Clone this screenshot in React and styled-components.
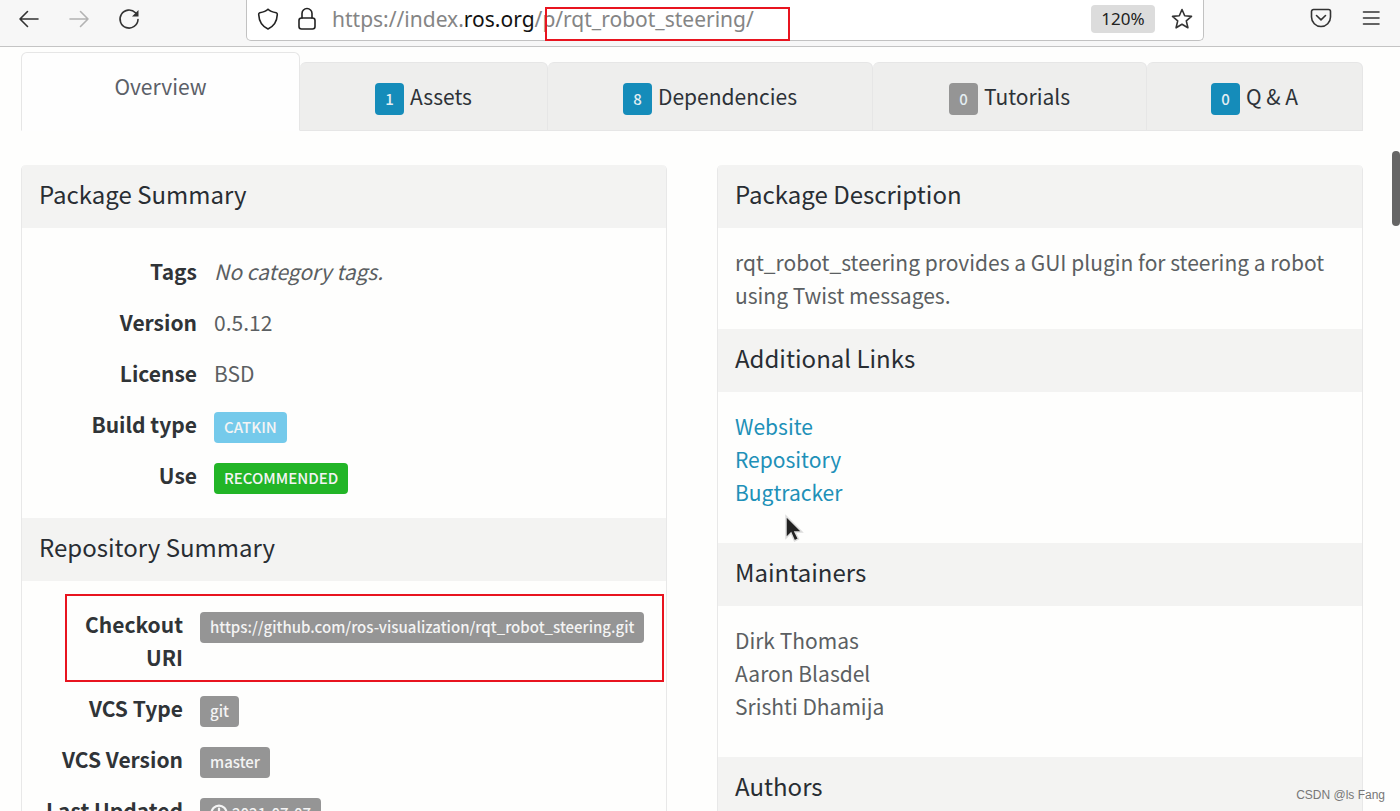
import React from "react";
import styled, { createGlobalStyle } from "styled-components";

const Global = createGlobalStyle`
  * { box-sizing: border-box; }
  body {
    margin: 0;
    background: #fefefd;
    color: #5b5f62;
    font: 21px/33px "Noto Sans CJK SC", "Noto Sans", sans-serif;
  }
  button { font: inherit; color: inherit; border: 0; background: none; padding: 0; }
`;

const Window = styled.div`
  position: relative;
  height: 100vh;
  overflow: hidden;
`;

const Toolbar = styled.header`
  display: grid;
  grid-template-columns: 246px 1fr 196px;
  height: 47px;
  background: #f7f7f7;
  border-bottom: 1px solid #c4c4c4;
`;

const NavGroup = styled.div`
  display: flex;
  gap: 26px;
  height: 38px;
  padding-left: 17px;
  align-items: center;
`;

const MenuGroup = styled(NavGroup)`
  justify-content: flex-end;
  padding: 0 17px 2px 0;
`;

const IconButton = styled.button`
  display: flex;
  color: ${(p) => (p.$dim ? "#b3b3b3" : "#333")};
`;

const AddressBar = styled.div`
  position: relative;
  display: flex;
  align-items: center;
  gap: 15px;
  height: 41px;
  padding: 0 9px 3px;
  background: #fff;
  border: solid #c2c2c2;
  border-width: 0 1px 1px;
  border-radius: 0 0 5px 5px;
`;

const Url = styled.div`
  flex: 1;
  margin-left: -2px;
  color: #858585;
  font: 21px/30px "Noto Sans", sans-serif;
  b { color: #111; font-weight: 400; }
`;

const Zoom = styled.button`
  width: 64px;
  height: 28px;
  border-radius: 4px;
  background: #dcdcdc;
  color: #222;
  font: 17px/28px "Noto Sans", sans-serif;
`;

const Highlight = styled.div`
  position: absolute;
  border: 2px solid #e8141f;
  pointer-events: none;
`;

const UrlHighlight = styled(Highlight)`
  top: 7px;
  left: 298px;
  width: 245px;
  height: 34px;
`;

const CheckoutHighlight = styled(Highlight)`
  top: 13px;
  left: 43px;
  right: 2px;
  height: 88px;
`;

const Page = styled.main`
  padding: 5px 37px 0 21px;
`;

const Tabs = styled.nav`
  display: grid;
  grid-template-columns: 279fr 248fr 325fr 274fr 216fr;
  align-items: end;
`;

const Tab = styled.button`
  display: flex;
  align-items: center;
  justify-content: center;
  gap: 6px;
  height: ${(p) => (p.$active ? 79 : 69)}px;
  padding-bottom: ${(p) => (p.$active ? 10 : 0)}px;
  color: ${(p) => (p.$active ? "#5b6068" : "#2d3238")};
  background: ${(p) => (p.$active ? "#fefefe" : "#eeeeed")};
  border: 1px solid #e6e6e6;
  border-bottom-color: ${(p) => (p.$active ? "transparent" : "#e6e6e6")};
  border-left-width: ${(p) => (p.$active ? 1 : 0)}px;
  border-radius: 6px 6px 0 0;
`;

const Count = styled.span`
  width: 29px;
  margin-top: 5px;
  border-radius: 4px;
  background: ${(p) => (p.$muted ? "#959595" : "#158cba")};
  color: #e4eef2;
  font-size: 15px;
  font-weight: 500;
  line-height: 32px;
`;

const Columns = styled.div`
  display: grid;
  grid-template-columns: 1fr 1fr;
  gap: 50px;
  margin-top: 34px;
`;

const Card = styled.section`
  border: solid #e8e8e8;
  border-width: 0 1px;
  border-radius: 5px 5px 0 0;
  overflow: hidden;
`;

const CardTitle = styled.h2`
  margin: 0;
  padding: 12px 17px 18px;
  background: #f3f3f2;
  color: #282d33;
  font-size: 24px;
  font-weight: 400;
  line-height: 33px;
`;

const CardBody = styled.div`
  position: relative;
  padding: 18px 17px ${(p) => (p.$loose ? 34 : 17)}px;
`;

const Facts = styled.table`
  width: 100%;
  border-collapse: collapse;
  th {
    width: ${(p) => p.$labelWidth}px;
    padding: 9px 8px 9px 0;
    color: #303437;
    font-weight: 700;
    text-align: right;
    vertical-align: top;
  }
  td { padding: 9px 0 9px 9px; vertical-align: top; }
`;

const BadgeCell = styled.td`
  && { padding: 13px 0 7px 9px; line-height: 31px; }
`;

const tones = { info: "#75caeb", good: "#22b527", plain: "#959595" };

const Badge = styled.span`
  display: inline-flex;
  align-items: center;
  gap: 4px;
  height: 31px;
  padding: 0 10px 2px;
  border-radius: 4px;
  background: ${(p) => tones[p.$tone]};
  color: #f4f4f4;
  font-size: 15px;
  font-weight: 500;
  white-space: nowrap;
  vertical-align: top;
`;

const Lines = styled.ul`
  margin: 0;
  padding: 0;
  list-style: none;
  a { color: #2090b8; text-decoration: none; }
`;

const Text = styled.p`
  margin: 0;
`;

const ScrollThumb = styled.div`
  position: absolute;
  top: 151px;
  right: 0;
  width: 8px;
  height: 75px;
  border-radius: 4px;
  background: #666;
`;

const Pointer = styled.svg`
  position: absolute;
  left: 784px;
  top: 514px;
`;

const Credit = styled.small`
  position: absolute;
  right: 15px;
  bottom: 6px;
  color: #777;
  font: 12px/20px "Liberation Sans", sans-serif;
`;

const Icon = ({ size = 24, children, ...rest }) => (
  <svg width={size} height={size} viewBox="0 0 24 24" fill="none" stroke="currentColor"
    strokeWidth="1.6" strokeLinecap="round" strokeLinejoin="round" aria-hidden="true" {...rest}>
    {children}
  </svg>
);

const tabs = [
  { name: "Overview", active: true },
  { name: "Assets", count: 1 },
  { name: "Dependencies", count: 8 },
  { name: "Tutorials", count: 0, muted: true },
  { name: "Q & A", count: 0 },
];

function Fact({ label, tone, children }) {
  return (
    <tr>
      <th scope="row">{label}</th>
      {tone ? <BadgeCell><Badge $tone={tone}>{children}</Badge></BadgeCell> : <td>{children}</td>}
    </tr>
  );
}

export default function App() {
  return (
    <Window>
      <Global />
      <Toolbar>
        <NavGroup>
          <IconButton aria-label="Back"><Icon><path d="M21 12H3M10.500 4.500 3 12l7.500 7.500" /></Icon></IconButton>
          <IconButton aria-label="Forward" $dim><Icon><path d="M3 12h18M13.500 4.500 21 12l-7.500 7.500" /></Icon></IconButton>
          <IconButton aria-label="Reload">
            <Icon>
              <path d="M18.500 5.800A9 9 0 1 0 21 12.500" />
              <path d="M21.500 3v6.500H15z" fill="currentColor" stroke="none" />
            </Icon>
          </IconButton>
        </NavGroup>
        <AddressBar>
          <Icon color="#222"><path d="M12 2.200C10 4.200 6 5.300 3.800 5.700C2.800 6 2.600 6.500 2.700 7.500C3 14 5.500 19 12 22C18.500 19 21 14 21.300 7.500C21.400 6.500 21.200 6 20.200 5.700C18 5.300 14 4.200 12 2.200Z" /></Icon>
          <Icon color="#222"><rect x="4" y="11" width="16" height="11" rx="2.500" /><path d="M7 11V6.500a5 5 0 0 1 10 0V11" /></Icon>
          <Url role="textbox" aria-label="Address">https://index.<b>ros.org</b>/p/rqt_robot_steering/</Url>
          <Zoom>120%</Zoom>
          <IconButton aria-label="Bookmark">
            <Icon><path d="M12 2.500l2.700 6.300 6.800.600-5.200 4.500 1.600 6.900L12 17.200l-5.900 3.600 1.600-6.900L2.500 9.400l6.800-.600z" /></Icon>
          </IconButton>
          <UrlHighlight />
        </AddressBar>
        <MenuGroup>
          <IconButton aria-label="Save to Pocket">
            <Icon><path d="M4.500 3.500h15a2 2 0 0 1 2 2V11a9.500 9.500 0 0 1-19 0V5.500a2 2 0 0 1 2-2zM7.500 9.500l4.500 4.300 4.500-4.300" /></Icon>
          </IconButton>
          <IconButton aria-label="Menu">
            <Icon><path d="M4.500 6h15.500M4.500 12h15.500M4.500 18h15.500" /></Icon>
          </IconButton>
        </MenuGroup>
      </Toolbar>

      <Page>
        <Tabs>
          {tabs.map((t) => (
            <Tab key={t.name} $active={t.active}>
              {t.count !== undefined && <Count $muted={t.muted}>{t.count}</Count>}
              {t.name}
            </Tab>
          ))}
        </Tabs>

        <Columns>
          <Card>
            <CardTitle>Package Summary</CardTitle>
            <CardBody>
              <Facts $labelWidth={166}>
                <tbody>
                  <Fact label="Tags"><em>No category tags.</em></Fact>
                  <Fact label="Version">0.5.12</Fact>
                  <Fact label="License">BSD</Fact>
                  <Fact label="Build type" tone="info">CATKIN</Fact>
                  <Fact label="Use" tone="good">RECOMMENDED</Fact>
                </tbody>
              </Facts>
            </CardBody>
            <CardTitle>Repository Summary</CardTitle>
            <CardBody>
              <Facts $labelWidth={152}>
                <tbody>
                  <Fact label={<>Checkout<br />URI</>} tone="plain">https://github.com/ros-visualization/rqt_robot_steering.git</Fact>
                  <Fact label="VCS Type" tone="plain">git</Fact>
                  <Fact label="VCS Version" tone="plain">master</Fact>
                  <Fact label="Last Updated" tone="plain">
                    <Icon size={18} strokeWidth="3"><circle cx="12" cy="12" r="10" /><path d="M12 6v7H8" /></Icon>
                    2021-07-07
                  </Fact>
                </tbody>
              </Facts>
              <CheckoutHighlight />
            </CardBody>
          </Card>

          <Card>
            <CardTitle>Package Description</CardTitle>
            <CardBody>
              <Text>rqt_robot_steering provides a GUI plugin for steering a robot using Twist messages.</Text>
            </CardBody>
            <CardTitle>Additional Links</CardTitle>
            <CardBody $loose>
              <Lines>
                <li><a href="#website">Website</a></li>
                <li><a href="#repository">Repository</a></li>
                <li><a href="#bugtracker">Bugtracker</a></li>
              </Lines>
            </CardBody>
            <CardTitle>Maintainers</CardTitle>
            <CardBody $loose>
              <Lines>
                <li>Dirk Thomas</li>
                <li>Aaron Blasdel</li>
                <li>Srishti Dhamija</li>
              </Lines>
            </CardBody>
            <CardTitle>Authors</CardTitle>
          </Card>
        </Columns>
      </Page>

      <ScrollThumb />
      <Pointer width="20" height="30" viewBox="0 0 20 30" aria-hidden="true">
        <path d="M2 2v22l5-5 3.500 8 4-2-3.500-7h7z" fill="#222" stroke="#ddd" strokeWidth="1.500" />
      </Pointer>
      <Credit>CSDN @ls Fang</Credit>
    </Window>
  );
}
